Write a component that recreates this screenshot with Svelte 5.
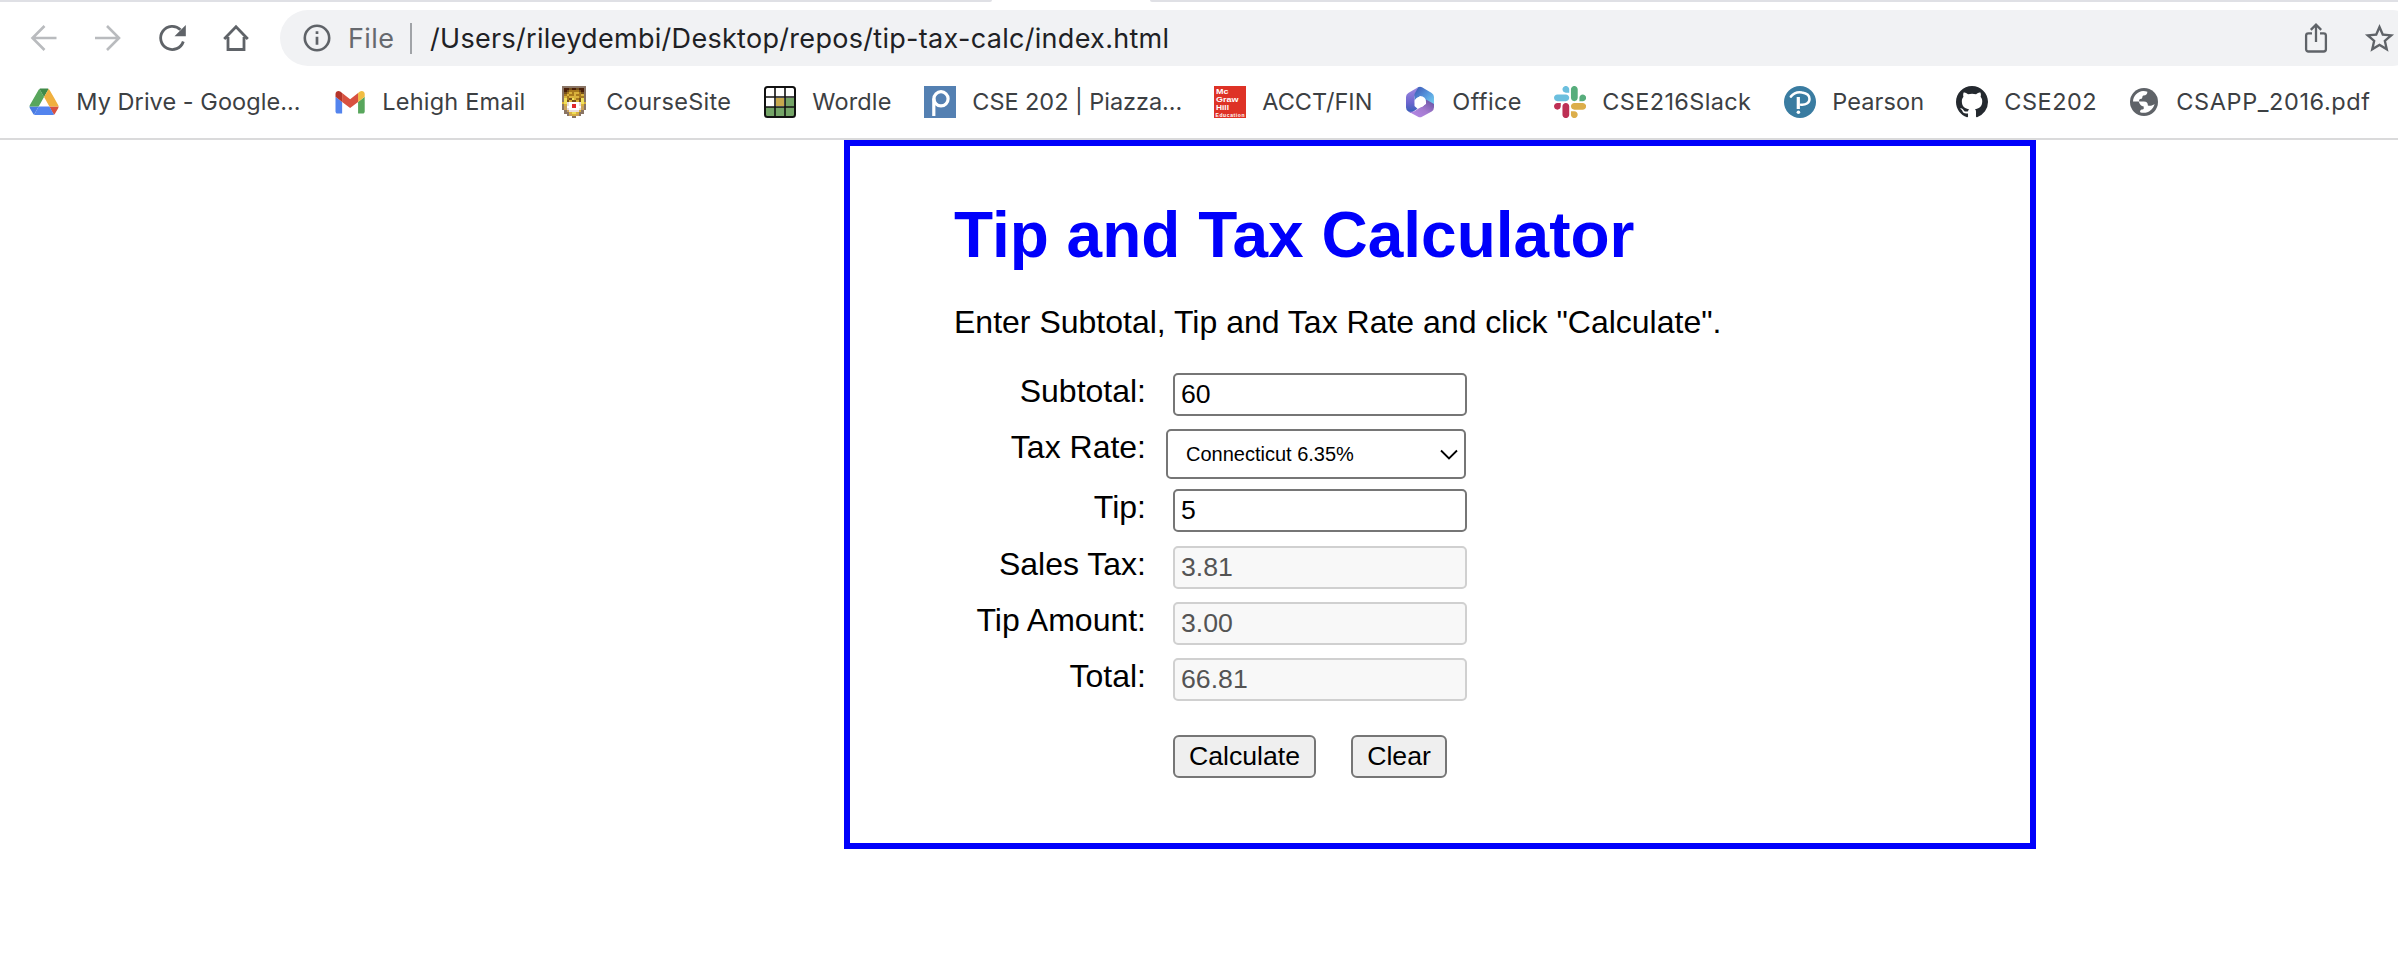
<script>
  const bookmarks = [
    { icon: 'drive', label: 'My Drive - Google...', width: 306, spacing: 0.05 },
    { icon: 'gmail', label: 'Lehigh Email', width: 224, spacing: 0.2 },
    { icon: 'lion', label: 'CourseSite', width: 206, spacing: 0.3 },
    { icon: 'wordle', label: 'Wordle', width: 160, spacing: 0.15 },
    { icon: 'piazza', label: 'CSE 202 | Piazza...', width: 290, spacing: -0.05 },
    { icon: 'mcgraw', label: 'ACCT/FIN', width: 190, spacing: 0 },
    { icon: 'office', label: 'Office', width: 150, spacing: 0.4 },
    { icon: 'slack', label: 'CSE216Slack', width: 230, spacing: 0.35 },
    { icon: 'pearson', label: 'Pearson', width: 172, spacing: 0.1 },
    { icon: 'github', label: 'CSE202', width: 172, spacing: 0.5 },
    { icon: 'globe', label: 'CSAPP_2016.pdf', width: 260, spacing: 0.6 }
  ];

  // Pixel art of the mascot crest, one character per pixel.
  const crestColors = {
    b: '#8a7565', d: '#4a1f08', g: '#a87a1e', y: '#d9b23c', l: '#f0e05a',
    w: '#ffffff', p: '#e9dcdc', r: '#e0282c', t: '#c9a25c', n: '#75501c'
  };
  const crest = [
    'bbbbbbbbbb',
    'bddnddnddb',
    'bdnggggndb',
    'bngygyygnb',
    'bgyggyggyb',
    'bygyyyyggb',
    'blgnlygnlb',
    'blnynnynlb',
    'ylpwwwwply',
    'bypwrrwpyb',
    'btwwrrwwtb',
    'btpwwwwptb',
    '.btppppyb.',
    '.bbyllybb.',
    '..btyytb..',
    '....bb....'
  ];
  const crestPixels = crest.flatMap((row, y) =>
    [...row].map((c, x) => ({ c, x, y })).filter((p) => p.c !== '.')
  );
</script>

<div class="browser">
  <div class="tabstrip"><i class="strip-left"></i><i class="strip-right"></i></div>
  <div class="toolbar">
    <div class="nav">
      <svg width="64" height="56" viewBox="0 0 64 56" fill="none" stroke="#b9bbbe" stroke-width="2.6"><path d="M56.5 28H33M44.5 16 32.5 28l12 12" /></svg>
      <svg width="64" height="56" viewBox="0 0 64 56" fill="none" stroke="#b9bbbe" stroke-width="2.6"><path d="M31 28h23.5M43 16l12 12-12 12" /></svg>
      <svg width="64" height="56" viewBox="0 0 64 56" fill="none" stroke="#5f6368" stroke-width="2.8"><path d="M55.3 31.5A11.6 11.6 0 1 1 52.5 19.8" /><path d="M57.8 15v11.3H46.5z" fill="#5f6368" stroke="none" /></svg>
      <svg width="64" height="56" viewBox="0 0 64 56" fill="none" stroke="#5f6368" stroke-width="2.8"><path d="M32.2 29 44 16.8 55.8 29M36 27v12.5h16V27" /></svg>
    </div>
    <div class="omnibox">
      <svg class="info" width="28" height="28" viewBox="0 0 28 28"><circle cx="14" cy="14" r="12.2" fill="none" stroke="#5f6368" stroke-width="2.6" /><path d="M14 12.7v8M14 7.2v2.9" stroke="#5f6368" stroke-width="2.7" /></svg>
      <span class="scheme">File</span>
      <span class="divider"></span>
      <span class="url">/Users/rileydembi/Desktop/repos/tip-tax-calc/index.html</span>
      <svg class="share" width="24" height="32" viewBox="0 0 24 32" fill="none" stroke="#5f6368" stroke-width="2.3"><path d="M8 11.3H4.4A2.3 2.3 0 0 0 2.1 13.6v13.6a2.3 2.3 0 0 0 2.3 2.3h15.2a2.3 2.3 0 0 0 2.3-2.3V13.6a2.3 2.3 0 0 0-2.3-2.3H16M12 20V3M6.8 7.9 12 2.7l5.2 5.2" /></svg>
      <svg class="star" width="35" height="35" viewBox="0 0 24 24" fill="#5f6368"><path d="M22 9.24l-7.19-.62L12 2 9.19 8.63 2 9.24l5.46 4.73L5.82 21 12 17.27 18.18 21l-1.63-7.03L22 9.24zM12 15.4l-3.76 2.27 1-4.28-3.32-2.88 4.38-.38L12 6.1l1.71 4.04 4.38.38-3.32 2.88 1 4.28L12 15.4z" /></svg>
    </div>
  </div>

  <div class="bookmarks">
    {#each bookmarks as b}
      <div class="bookmark" style="width: {b.width}px">
        <svg class="favicon" width="32" height="32" viewBox="0 0 32 32">
          {#if b.icon === 'drive'}
            <g transform="translate(1.5 2.6) scale(.333 .34)">
              <path d="m6.6 66.85 3.85 6.65c.8 1.4 1.95 2.5 3.3 3.3L27.5 53H0c0 1.55.4 3.1 1.2 4.5z" fill="#4a7be0" />
              <path d="M43.65 25 29.9 1.2c-1.35.8-2.5 1.9-3.3 3.3l-25.4 44A9.06 9.06 0 0 0 0 53h27.5z" fill="#58a65c" />
              <path d="M73.55 76.8c1.35-.8 2.5-1.9 3.3-3.3l9.25-16c.8-1.4 1.2-2.95 1.2-4.5H59.8l5.85 11.5z" fill="#d85140" />
              <path d="M43.65 25 57.4 1.2C56.05.4 54.5 0 52.9 0H34.4c-1.6 0-3.15.45-4.5 1.2z" fill="#3f8a49" />
              <path d="M59.8 53H27.5L13.75 76.8c1.35.8 2.9 1.2 4.5 1.2h50.8c1.6 0 3.15-.45 4.5-1.2z" fill="#5384ee" />
              <path d="m73.4 26.5-12.7-22c-.8-1.4-1.95-2.5-3.3-3.3L43.65 25 59.8 53h27.45c0-1.55-.4-3.1-1.2-4.5z" fill="#f0b03f" />
            </g>
          {:else if b.icon === 'gmail'}
            <g transform="translate(1.5 5) scale(.332 .34) translate(-52 -42)">
              <path d="M58 108h14V74L52 59v43c0 3.32 2.69 6 6 6" fill="#5384ee" />
              <path d="M120 108h14c3.32 0 6-2.69 6-6V59l-20 15" fill="#58a65c" />
              <path d="M120 48v26l20-15v-8c0-7.42-8.47-11.65-14.4-7.2" fill="#f1bd42" />
              <path d="M72 74V48l24 18 24-18v26L96 92" fill="#d85140" />
              <path d="M52 51v8l20 15V48l-5.6-4.2c-5.94-4.45-14.4-.22-14.4 7.2" fill="#b5352a" />
            </g>
          {:else if b.icon === 'lion'}
            <g shape-rendering="crispEdges">
              {#each crestPixels as p}
                <rect x={4 + p.x * 2.4} y={p.y * 2} width="2.4" height="2" fill={crestColors[p.c]} />
              {/each}
            </g>
          {:else if b.icon === 'wordle'}
            <rect x="1" y="1" width="30" height="30" rx="2.5" fill="#fff" />
            <path d="M12 12h8v8h-8z" fill="#c6a94e" />
            <path d="M21 12h10v19H3l-2-2v-8h20z" fill="#74a467" />
            <rect x="1" y="1" width="30" height="30" rx="2.5" fill="none" stroke="#111" stroke-width="2" />
            <path d="M11 1v30M21 1v30M1 11h30M1 21h30" stroke="#111" stroke-width="1.6" />
          {:else if b.icon === 'piazza'}
            <path d="M0 0h32v32H0z" fill="#5480b2" />
            <g fill="none" stroke="#fff" stroke-width="3.2"><circle cx="17" cy="12.8" r="7.1" /><path d="M9.8 12.5V30" /></g>
          {:else if b.icon === 'mcgraw'}
            <path d="M0 0h32v32H0z" fill="#de3226" />
            <g class="mcgraw"><text x="2" y="8" textLength="12.5" lengthAdjust="spacingAndGlyphs">Mc</text><text x="2" y="16.2" textLength="22.5" lengthAdjust="spacingAndGlyphs">Graw</text><text x="2" y="24.4" textLength="13" lengthAdjust="spacingAndGlyphs">Hill</text><text class="small" x="1.5" y="30.5" textLength="29">Education</text></g>
          {:else if b.icon === 'office'}
            <defs>
              <linearGradient id="office-left" x1="0" y1="0" x2="0" y2="1"><stop offset="0" stop-color="#a08ae0" /><stop offset=".6" stop-color="#6c65cf" /><stop offset="1" stop-color="#315fb5" /></linearGradient>
              <linearGradient id="office-top" x1="0" y1="0" x2="1" y2="1"><stop offset="0" stop-color="#3d55b4" /><stop offset=".5" stop-color="#5696dc" /><stop offset="1" stop-color="#7bdcf6" /></linearGradient>
              <linearGradient id="office-bottom" x1="0" y1="1" x2="1" y2="0"><stop offset="0" stop-color="#b78bea" /><stop offset=".5" stop-color="#a57bd0" /><stop offset="1" stop-color="#604e9c" /></linearGradient>
            </defs>
            <path d="M14 1.3 4.3 6.9Q2 8.3 2 11v10.5q0 2.7 2.4 4.1l2.6 1.5 6.5-4.3-3-2.8V11z" fill="url(#office-left)" />
            <path d="M14 1.3q2-1 4 0l9.7 5.6Q30 8.3 30 11v10l-8-5.2q0-5-6-5.7l-5.5 4.2V8z" fill="url(#office-top)" />
            <path d="M30 18v3.3q0 2.8-2.3 4.2L18 30.8q-2 1-4 0l-9.7-5.4q5.5 1.3 8.7-1.8l9-5.6V13.5z" fill="url(#office-bottom)" />
            <circle cx="16" cy="16" r="5.2" fill="#fff" />
          {:else if b.icon === 'slack'}
            <g transform="scale(.262) translate(0 -.2)">
              <path d="M25.8 77.6c0 7.1-5.8 12.9-12.9 12.9S0 84.7 0 77.6s5.8-12.9 12.9-12.9h12.9zM32.3 77.6c0-7.1 5.8-12.9 12.9-12.9s12.9 5.8 12.9 12.9v32.3c0 7.1-5.8 12.9-12.9 12.9s-12.9-5.8-12.9-12.9z" fill="#bd3054" />
              <path d="M45.2 25.8c-7.1 0-12.9-5.8-12.9-12.9S38.1 0 45.2 0s12.9 5.8 12.9 12.9v12.9zM45.2 32.3c7.1 0 12.9 5.8 12.9 12.9s-5.8 12.9-12.9 12.9H12.9C5.8 58.1 0 52.3 0 45.2s5.8-12.9 12.9-12.9z" fill="#6bbfde" />
              <path d="M97 45.2c0-7.1 5.8-12.9 12.9-12.9s12.9 5.8 12.9 12.9-5.8 12.9-12.9 12.9H97zM90.5 45.2c0 7.1-5.8 12.9-12.9 12.9s-12.9-5.8-12.9-12.9V12.9C64.7 5.8 70.5 0 77.6 0s12.9 5.8 12.9 12.9z" fill="#57ad7c" />
              <path d="M77.6 97c7.1 0 12.9 5.8 12.9 12.9s-5.8 12.9-12.9 12.9-12.9-5.8-12.9-12.9V97zM77.6 90.5c-7.1 0-12.9-5.8-12.9-12.9s5.8-12.9 12.9-12.9h32.3c7.1 0 12.9 5.8 12.9 12.9s-5.8 12.9-12.9 12.9z" fill="#dcae4b" />
            </g>
          {:else if b.icon === 'pearson'}
            <circle cx="16" cy="16" r="16" fill="#3a7ca1" />
            <g fill="none" stroke="#fff"><path d="M6.8 10.6C10 6.6 14.5 5.8 18 6.4c4.4.6 7.5 3 7.5 6.5 0 4-4 6.3-8.6 5.8" stroke-width="2.5" stroke-linecap="round" /><path d="M14.3 11v12" stroke-width="3.2" /></g>
            <circle cx="14.4" cy="26.2" r="1.8" fill="#fff" />
          {:else if b.icon === 'github'}
            <path transform="scale(2)" fill="#24292f" d="M8 0C3.58 0 0 3.58 0 8c0 3.54 2.29 6.53 5.47 7.59.4.07.55-.17.55-.38 0-.19-.01-.82-.01-1.49-2.01.37-2.53-.49-2.69-.94-.09-.23-.48-.94-.82-1.13-.28-.15-.68-.52-.01-.53.63-.01 1.08.58 1.23.82.72 1.21 1.87.87 2.33.66.07-.52.28-.87.51-1.07-1.78-.2-3.64-.89-3.64-3.95 0-.87.31-1.59.82-2.15-.08-.2-.36-1.02.08-2.12 0 0 .67-.21 2.2.82.64-.18 1.32-.27 2-.27s1.36.09 2 .27c1.53-1.04 2.2-.82 2.2-.82.44 1.1.16 1.92.08 2.12.51.56.82 1.27.82 2.15 0 3.07-1.87 3.75-3.65 3.95.29.25.54.73.54 1.48 0 1.07-.01 1.93-.01 2.2 0 .21.15.46.55.38A8.01 8.01 0 0 0 16 8c0-4.42-3.58-8-8-8z" />
          {:else}
            <circle cx="16" cy="16" r="14" fill="#5f6368" />
            <path d="M5 15.5C5.2 9.8 9.8 5.2 15.2 5c1.6 0 3 .2 4.2.7-.2 2.6-1.2 3.7-3.9 3.7-1.6.3-.6 3-2.3 3.4-1.6.2-2.4.8-2 2.7h4.6c2.9 0 4.1 1.6 4.1 4 2.6.5 4.8 0 6.7-1.6-1.2 5.1-5.7 8.9-11 8.9-1.2 0-2.4-.2-3.5-.6-.2-2.8 1.8-2.5 3.6-3.2v-2.5c-2.7-.3-3.9-2-5-5z" fill="#fff" />
          {/if}
        </svg>
        <span class="name" style="letter-spacing: {b.spacing}px">{b.label}</span>
      </div>
    {/each}
  </div>
</div>

<main class="calculator">
  <h1>Tip and Tax Calculator</h1>
  <p>Enter Subtotal, Tip and Tax Rate and click "Calculate".</p>
  <div class="row"><label for="subtotal">Subtotal:</label><input id="subtotal" type="text" value="60" /></div>
  <div class="row tall">
    <label for="rate">Tax Rate:</label>
    <div class="select">
      <select id="rate"><option>Connecticut 6.35%</option></select>
      <svg width="18" height="12" viewBox="0 0 18 12" fill="none" stroke="#000" stroke-width="1.8"><path d="m1 1.5 8 8 8-8" /></svg>
    </div>
  </div>
  <div class="row tip"><label for="tip">Tip:</label><input id="tip" type="text" value="5" /></div>
  <div class="row"><label for="tax">Sales Tax:</label><input id="tax" type="text" value="3.81" disabled /></div>
  <div class="row"><label for="amount">Tip Amount:</label><input id="amount" type="text" value="3.00" disabled /></div>
  <div class="row"><label for="total">Total:</label><input id="total" type="text" value="66.81" disabled /></div>
  <div class="actions">
    <button class="calculate" type="button">Calculate</button>
    <button class="clear" type="button">Clear</button>
  </div>
</main>

<style>
  :global(body) { margin: 0; background: #fff; overflow: hidden; }
  .browser { width: 2398px; height: 140px; box-sizing: border-box; overflow: hidden; border-bottom: 2px solid #dadadb; font-family: Inter, sans-serif; }
  .tabstrip { display: flex; justify-content: space-between; height: 2px; }
  .tabstrip i { background: #dfe0e5; }
  .strip-left { width: 992px; border-bottom-right-radius: 2px; }
  .strip-right { width: 1248px; border-bottom-left-radius: 2px; }
  .toolbar { display: flex; width: 2420px; height: 56px; margin-top: 8px; }
  .nav { display: flex; width: 280px; flex: none; }
  .nav svg { flex: none; }
  .omnibox { display: flex; align-items: center; flex: 1; box-sizing: border-box; padding: 0 23px 0 22px; border-radius: 28px; background: #f1f2f4; font-size: 27px; line-height: 56px; white-space: nowrap; }
  .info { flex: none; margin-left: 1px; }
  .scheme { width: 60px; margin-left: 17px; box-sizing: border-box; padding-top: 1px; color: #66696e; letter-spacing: 0.4px; }
  .divider { width: 2px; height: 31px; margin-right: 18px; margin-left: 2px; background: #a0a3a7; }
  .url { flex: 1; padding-top: 1px; color: #202124; letter-spacing: 0.3px; }
  .share { margin-right: 34px; }
  .bookmarks { display: flex; height: 32px; margin-top: 20px; padding-left: 28px; width: 2400px; }
  .bookmark { display: flex; align-items: center; flex: none; gap: 16.3px; }
  .favicon { flex: none; }
  .name { color: #3c4043; font-size: 23.5px; line-height: 32px; white-space: nowrap; }
  .mcgraw { fill: #fff; font: bold 7.2px "Liberation Sans", sans-serif; }
  .mcgraw .small { font-size: 5px; }

  .calculator { box-sizing: border-box; width: 1192px; height: 709px; margin-left: 844px; padding: 52px 0 0 104px; border: 6px solid #0000fb; color: #000; font-family: "Liberation Sans", Arial, sans-serif; font-size: 32px; line-height: 37px; }
  h1 { margin: 0; color: #0000fb; font-size: 64px; line-height: 74px; }
  p { margin: 32px 0; }
  .row { display: flex; align-items: flex-start; gap: 27px; height: 56px; }
  .row.tall { height: 60px; }
  .row.tip { height: 57px; }
  label { width: 192px; text-align: right; }
  input { box-sizing: border-box; width: 294px; height: 43px; margin: 0; padding: 2px 5px 2px 6px; border: 2px solid #767676; border-radius: 5px; background: #fff; color: #000; font: 26.667px "Liberation Sans", Arial, sans-serif; }
  input:disabled { border-color: #d0d0d0; background: #f8f8f8; color: #545454; }
  .select { position: relative; width: 300px; margin-left: -7px; }
  select { display: block; box-sizing: border-box; width: 300px; height: 50px; margin: 0; padding: 0 0 1px 18px; border: 2px solid #767676; border-radius: 5px; appearance: none; background: #fff; color: #000; font: 20px "Liberation Sans", Arial, sans-serif; }
  .select svg { position: absolute; top: 20px; right: 8px; }
  .actions { display: flex; gap: 35px; margin: 21px 0 0 219px; }
  button { box-sizing: border-box; height: 43px; padding: 0; border: 2px solid #767676; border-radius: 6px; background: #efefef; color: #000; font: 26.667px "Liberation Sans", Arial, sans-serif; }
  .calculate { width: 143px; }
  .clear { width: 96px; }
</style>
